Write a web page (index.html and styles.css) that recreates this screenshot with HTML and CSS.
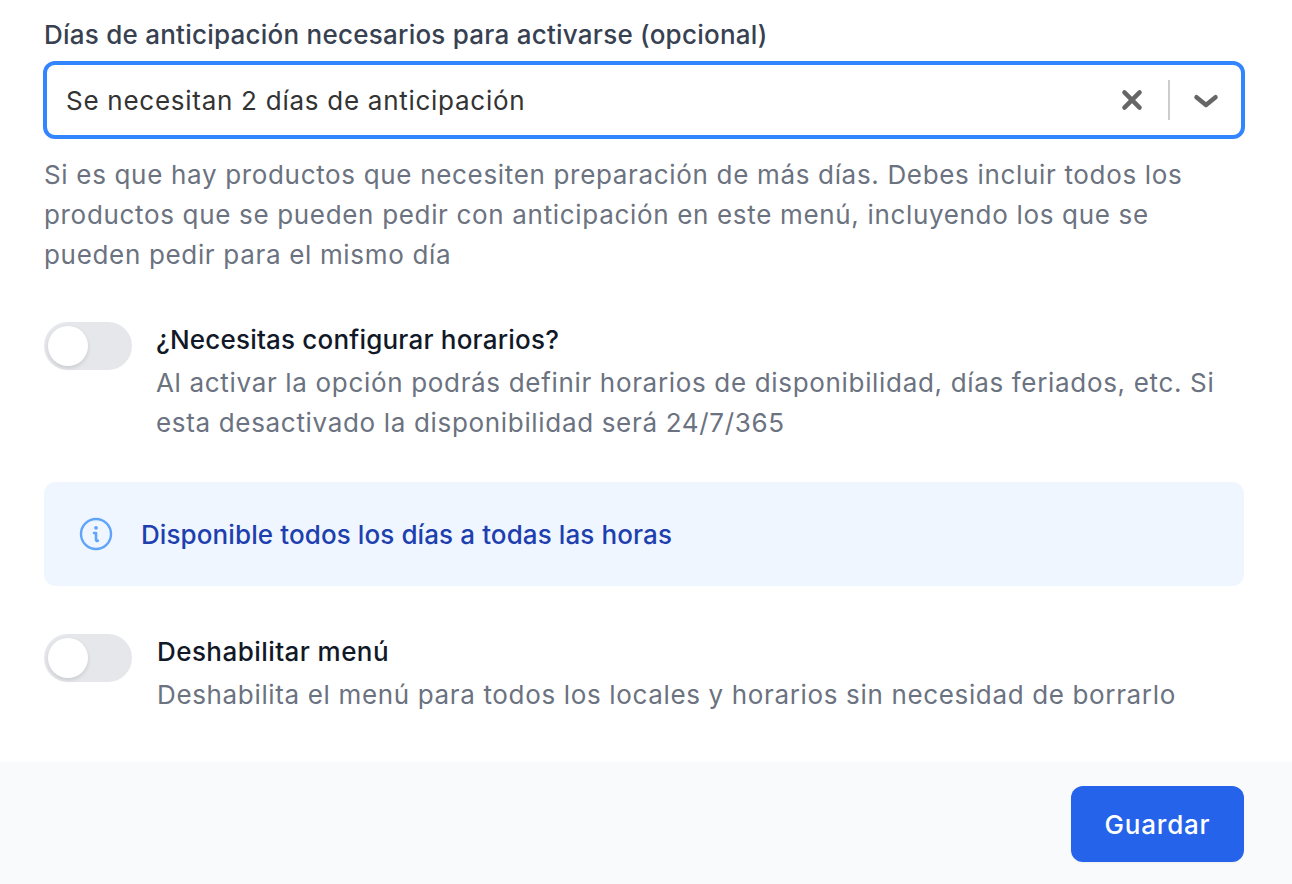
FILE: index.html
```html
<!DOCTYPE html>
<html lang="es">
<head>
<meta charset="utf-8">
<title>Menú</title>
<link rel="stylesheet" href="styles.css">
</head>
<body>
<main class="panel">
  <div class="content">
    <label class="label">Días de anticipación necesarios para activarse (opcional)</label>
    <div class="select">
      <span class="select-value">Se necesitan 2 días de anticipación</span>
      <svg class="icon-x" width="28" height="28" viewBox="0 0 20 20"><path d="M4.6 4.6 15.4 15.4M15.4 4.6 4.6 15.4" stroke="#666" stroke-width="3.2" stroke-linecap="round" fill="none"/></svg>
      <span class="select-sep"></span>
      <svg class="icon-chev" width="28" height="28" viewBox="0 0 20 20"><path d="M3.2 8 10 13.6 16.8 8" stroke="#666" stroke-width="3.2" stroke-linecap="round" stroke-linejoin="round" fill="none"/></svg>
    </div>
    <p class="help">Si es que hay productos que necesiten preparación de más días. Debes incluir todos los productos que se pueden pedir con anticipación en este menú, incluyendo los que se pueden pedir para el mismo día</p>

    <div class="toggle-row first">
      <span class="toggle"><span class="knob"></span></span>
      <div class="toggle-text">
        <div class="toggle-title">¿Necesitas configurar horarios?</div>
        <div class="toggle-desc">Al activar la opción podrás definir horarios de disponibilidad, días feriados, etc. Si esta desactivado la disponibilidad será 24/7/365</div>
      </div>
    </div>

    <div class="notice">
      <svg class="notice-icon" width="34" height="34" viewBox="0 0 34 34" fill="none"><circle cx="17" cy="17" r="15" stroke="#60a5fa" stroke-width="2.4"/><circle cx="17" cy="10.8" r="1.9" fill="#60a5fa"/><path d="M15 16h2v6.6c0 1.2.7 1.5 1.8 1.1" stroke="#60a5fa" stroke-width="2.6" stroke-linecap="round" stroke-linejoin="round"/></svg>
      <span class="notice-text">Disponible todos los días a todas las horas</span>
    </div>

    <div class="toggle-row second">
      <span class="toggle"><span class="knob"></span></span>
      <div class="toggle-text">
        <div class="toggle-title">Deshabilitar menú</div>
        <div class="toggle-desc">Deshabilita el menú para todos los locales y horarios sin necesidad de borrarlo</div>
      </div>
    </div>
  </div>
  <footer class="footer">
    <button class="save" type="button">Guardar</button>
  </footer>
</main>
</body>
</html>
```
FILE: styles.css
```css
* { box-sizing: border-box; }
html, body { margin: 0; padding: 0; background: #fff; }
body {
  width: 1292px;
  height: 884px;
  overflow: hidden;
  font-family: Inter, "Noto Sans", sans-serif;
  font-size: 26px;
  letter-spacing: 0.67px;
}
.panel { display: flex; flex-direction: column; height: 884px; }
.content { flex: 1; padding: 15px 48px 0 44px; }
.label { display: block; font-weight: 500; color: #374151; line-height: 40px; letter-spacing: 0.24px; }
.select {
  display: flex; align-items: center;
  height: 78px; margin: 6px -1px 0;
  border: 4px solid #3384ff; border-radius: 12px;
  padding: 0 21px 0 19px;
  color: #333;
}
.select-value { flex: 1; letter-spacing: 0.73px; }
.icon-x { margin-right: 22px; }
.select-sep { width: 2px; height: 40px; background: #ccc; margin-right: 22px; }
.help { margin: 16px 0 0; color: #6b7280; line-height: 40px; }
.toggle-row { display: flex; gap: 24px; }
.toggle-row.first { margin-top: 47px; }
.toggle-row.second { margin-top: 48px; gap: 25px; }
.toggle-row.second .toggle-title { letter-spacing: 0.44px; }
.toggle-row.second .toggle-desc { letter-spacing: 0.65px; }
.toggle {
  flex: none; position: relative;
  width: 88px; height: 48px; border-radius: 24px; background: #e5e7eb;
}
.knob {
  position: absolute; left: 4px; top: 4px;
  width: 40px; height: 40px; border-radius: 50%; background: #fff;
  box-shadow: 0 2px 4px rgba(0,0,0,.12);
}
.toggle-text { flex: 1; line-height: 40px; margin-top: -2px; }
.toggle-title { font-weight: 500; color: #111827; letter-spacing: 0.2px; }
.toggle-desc { color: #6b7280; margin-top: 3px; }
.notice {
  display: flex; align-items: center; gap: 28px;
  height: 104px; margin-top: 39px; padding: 0 35px;
  background: #eff6ff; border-radius: 12px;
}
.notice-text { font-weight: 500; color: #1e40af; letter-spacing: 0.1px; }
.footer {
  display: flex; justify-content: flex-end; align-items: center;
  height: 122px; padding: 2px 48px 0;
  background: #f9fafb;
}
.save {
  width: 173px; height: 76px;
  border: 0; border-radius: 12px; background: #2563eb; color: #fff;
  font: 500 26px Inter, sans-serif; letter-spacing: 0.8px;
  box-shadow: 0 1px 2px rgba(0,0,0,.05);
}
```
